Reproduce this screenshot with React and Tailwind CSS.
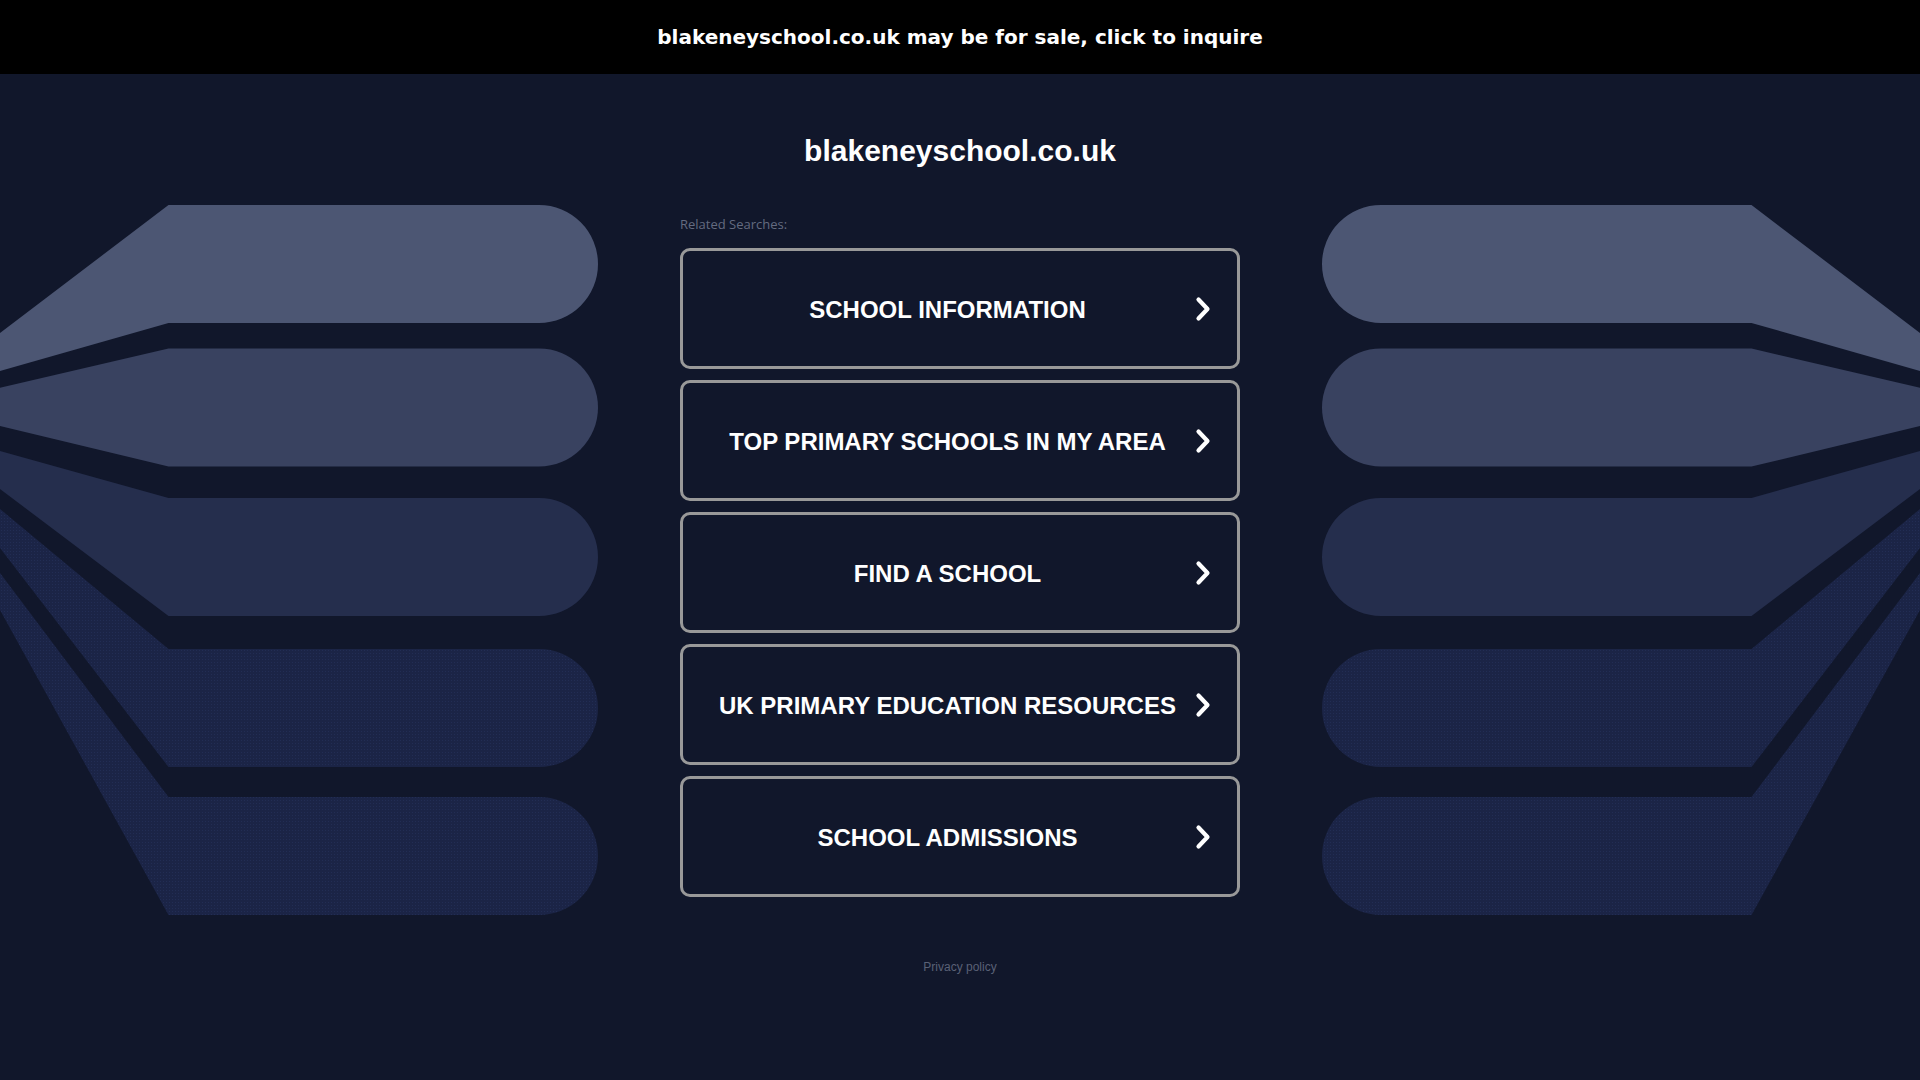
import React from "react";

const SHAPES = [
  { t: 0, lt: 128, lb: 166, fill: "#4c5673" },
  { t: 143.5, lt: 182.7, lb: 221, fill: "#394260" },
  { t: 293, lt: 246, lb: 284, fill: "#252e4d" },
  { t: 444, lt: 304, lb: 343, fill: "DOTS" },
  { t: 592, lt: 368, lb: 405, fill: "DOTS" },
];

function Fan({ id, flip }) {
  const h = 118;
  const r = h / 2;
  return (
    <svg
      width="598"
      height="710"
      viewBox="0 0 598 710"
      className={flip ? "shrink-0 -scale-x-100" : "shrink-0"}
    >
      <defs>
        <pattern id={id} width="3" height="3" patternUnits="userSpaceOnUse">
          <rect width="3" height="3" fill="#1b2446" />
          <circle cx="1.5" cy="1.5" r="0.5" fill="#243058" />
        </pattern>
      </defs>
      {SHAPES.map((s, i) => {
        const T = s.t;
        const B = s.t + h;
        const d = `M0,${s.lt} L168.5,${T} L539,${T} A${r},${r} 0 0 1 539,${B} L168.5,${B} L0,${s.lb} Z`;
        return <path key={i} d={d} fill={s.fill === "DOTS" ? `url(#${id})` : s.fill} />;
      })}
    </svg>
  );
}

function Chevron() {
  return (
    <svg width="16" height="26" viewBox="0 0 16 26" className="shrink-0">
      <polyline
        points="3.5,3.5 12.5,13 3.5,22.5"
        fill="none"
        stroke="#ffffff"
        strokeWidth="4.2"
        strokeLinecap="round"
        strokeLinejoin="round"
      />
    </svg>
  );
}

const LINKS = [
  "SCHOOL INFORMATION",
  "TOP PRIMARY SCHOOLS IN MY AREA",
  "FIND A SCHOOL",
  "UK PRIMARY EDUCATION RESOURCES",
  "SCHOOL ADMISSIONS",
];

export default function App() {
  return (
    <div className="min-h-screen w-full bg-[#11172b] flex flex-col">
      <div className="h-[74px] bg-black flex items-center justify-center">
        <a
          href="#"
          className="text-white font-bold text-[20px] leading-[24px] font-['DejaVu_Sans',sans-serif]"
        >
          blakeneyschool.co.uk may be for sale, click to inquire
        </a>
      </div>

      <h1 className="mt-[59px] h-[36px] text-center text-white font-bold text-[30px] leading-[36px] font-['Liberation_Sans',Arial,sans-serif]">
        blakeneyschool.co.uk
      </h1>

      <div className="mt-[36px] flex justify-between items-start">
        <Fan id="dotsL" />

        <div className="w-[560px] shrink-0 flex flex-col">
          <div className="mt-[11px] h-[16px] text-[13px] leading-[16px] text-[#646b80] font-['Open_Sans',sans-serif]">
            Related Searches:
          </div>
          <div className="mt-[16px] flex flex-col gap-[11px]">
            {LINKS.map((t) => (
              <a
                key={t}
                href="#"
                className="h-[121px] rounded-[10px] border-[3px] border-[#999999] bg-[#11172b] flex items-center pl-[17px] pr-[26px]"
              >
                <span className="flex-1 pt-[2px] text-center text-white font-bold text-[24px] leading-[28px] font-['Liberation_Sans',Arial,sans-serif]">
                  {t}
                </span>
                <Chevron />
              </a>
            ))}
          </div>
          <div className="mt-[62px] h-[16px] text-center text-[12px] leading-[16px] text-[#5a6176] font-['Liberation_Sans',Arial,sans-serif]">
            <a href="#">Privacy policy</a>
          </div>
        </div>

        <Fan id="dotsR" flip />
      </div>
    </div>
  );
}
